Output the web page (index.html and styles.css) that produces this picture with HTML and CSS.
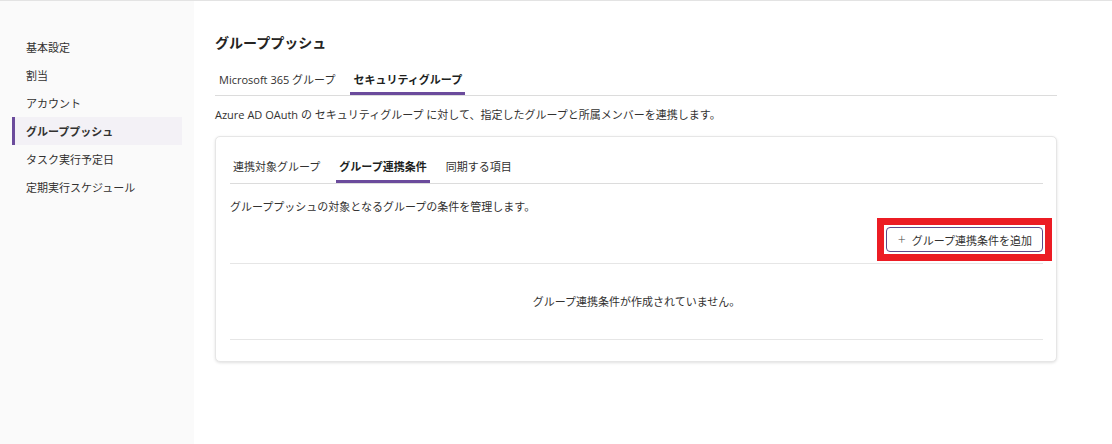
FILE: index.html
```html
<!DOCTYPE html>
<html lang="ja">
<head>
<meta charset="utf-8">
<title>グループプッシュ</title>
<link rel="stylesheet" href="styles.css">
</head>
<body>
<div class="app">
  <aside class="sidebar">
    <nav class="nav">
      <a class="nav-item">基本設定</a>
      <a class="nav-item">割当</a>
      <a class="nav-item">アカウント</a>
      <a class="nav-item active">グループプッシュ</a>
      <a class="nav-item">タスク実行予定日</a>
      <a class="nav-item">定期実行スケジュール</a>
    </nav>
  </aside>
  <main class="main">
    <h1 class="title">グループプッシュ</h1>
    <div class="tabs">
      <span class="tab">Microsoft 365 グループ</span>
      <span class="tab active">セキュリティグループ</span>
    </div>
    <p class="desc">Azure AD OAuth の セキュリティグループ に対して、指定したグループと所属メンバーを連携します。</p>
    <section class="card">
      <div class="tabs inner">
        <span class="tab">連携対象グループ</span>
        <span class="tab active">グループ連携条件</span>
        <span class="tab">同期する項目</span>
      </div>
      <p class="card-desc">グループプッシュの対象となるグループの条件を管理します。</p>
      <div class="actions">
        <span class="highlight">
          <button class="btn"><span class="plus">+</span>グループ連携条件を追加</button>
        </span>
      </div>
      <div class="empty">グループ連携条件が作成されていません。</div>
    </section>
  </main>
</div>
</body>
</html>
```
FILE: styles.css
```css
* { box-sizing: border-box; }
html, body { margin: 0; padding: 0; }
body {
  font-family: "Open Sans", "Noto Sans CJK JP", sans-serif;
  font-size: 11px;
  color: #323130;
  background: #fff;
  border-top: 1px solid #e3e3e3;
}
.app {
  display: flex;
  height: 443px;
}
.sidebar {
  width: 194px;
  background: #fafafa;
  padding-top: 32px;
}
.nav {
  display: flex;
  flex-direction: column;
  margin-left: 12px;
  width: 170px;
}
.nav-item {
  height: 28px;
  line-height: 28px;
  color: #323130;
  font-family: "Noto Sans CJK JP", sans-serif;
  font-size: 11px;
  border-left: 3px solid transparent;
  padding-left: 11px;
}
.nav-item.active {
  border-left-color: #6b4b9c;
  background: #f3f1f6;
  font-weight: bold;
}
.main {
  width: 863px;
  padding: 0 0 0 21px;
}
.title {
  margin: 31px 0 0;
  font-size: 14px;
  line-height: 20px;
  font-weight: bold;
  font-family: "Noto Sans CJK JP", sans-serif;
  color: #252423;
}
.tabs {
  display: flex;
  gap: 12px;
  margin-top: 8px;
  border-bottom: 1px solid #dcdcdc;
}
.tab {
  padding: 11px 3px 3px;
  line-height: 18px;
  border-bottom: 3px solid transparent;
  font-family: "Open Sans", "Noto Sans CJK JP", sans-serif;
  font-size: 11px;
  color: #323130;
}
.tabs .tab:first-child { padding-left: 4px; }
.tab.active {
  border-bottom-color: #6b4b9c;
  font-weight: bold;
  color: #201f1e;
}
.desc {
  margin: 10px 0 0;
  line-height: 18px;
  color: #323130;
}
.card {
  margin-top: 12px;
  width: 842px;
  border: 1px solid #e6e6e6;
  border-radius: 5px;
  box-shadow: 0 1px 3px rgba(0, 0, 0, 0.12);
  padding: 14px 13px 21px 14px;
  background: #fff;
}
.tabs.inner {
  margin-top: 0;
  gap: 13px;
}
.tabs.inner .tab { padding: 7px 3px 4px; }
.tabs.inner .tab:first-child { padding-left: 3px; }
.card-desc {
  margin: 14px 0 0;
  line-height: 18px;
}
.actions {
  display: flex;
  justify-content: flex-end;
  margin-top: 11px;
  padding-bottom: 11px;
  border-bottom: 1px solid #e6e6e6;
}
.highlight {
  display: flex;
  border: 7px solid #ec1c24;
  padding: 2px;
  background: #fff;
  margin: -9px -9px -9px 0;
}
.btn {
  height: 25px;
  padding: 0 10px 0 11px;
  display: flex;
  align-items: center;
  white-space: nowrap;
  background: #fff;
  border: 1px solid #5e4a8c;
  border-radius: 4px;
  font-family: "Noto Sans CJK JP", sans-serif;
  font-size: 11px;
  color: #323130;
}
.plus {
  font-size: 14px;
  font-weight: 300;
  margin-right: 6px;
  color: #444;
  font-family: "Open Sans", sans-serif;
}
.empty {
  height: 76px;
  line-height: 76px;
  text-align: center;
  border-bottom: 1px solid #e6e6e6;
  color: #323130;
}
```
